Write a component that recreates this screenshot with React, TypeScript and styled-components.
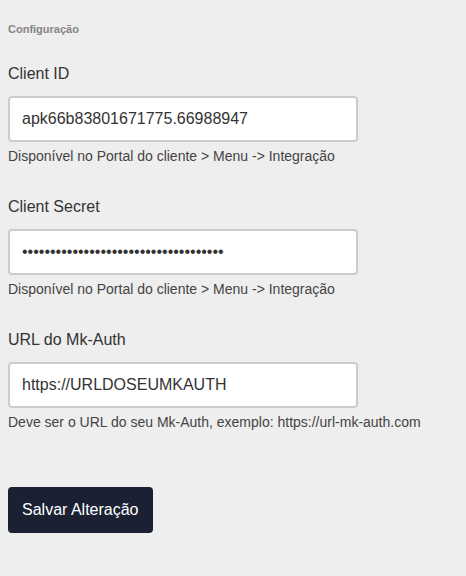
import React from 'react'
import styled, { createGlobalStyle } from 'styled-components'

const GlobalStyle = createGlobalStyle`
  html, body {
    margin: 0;
    background: #eeeeee;
  }
  body {
    font-family: "Liberation Sans", Arial, sans-serif;
  }
`

const Page = styled.form`
  padding: 23px 8px 40px;
  display: flex;
  flex-direction: column;
  align-items: flex-start;
`

const Title = styled.h6`
  margin: 0 0 29px;
  font-size: 11px;
  line-height: 13px;
  font-weight: bold;
  color: #858585;
`

const Field = styled.div`
  display: flex;
  flex-direction: column;
  align-items: flex-start;
  margin-bottom: 34px;
`

const Label = styled.label`
  font-size: 16px;
  line-height: 18px;
  color: #333;
  margin-bottom: 13px;
`

const Input = styled.input`
  box-sizing: border-box;
  width: 350px;
  height: 46px;
  padding: 0 12px;
  border: 2px solid #cccccc;
  border-radius: 4px;
  background: #fff;
  font-family: inherit;
  font-size: 16px;
  color: #333;
  outline: none;
`

const Hint = styled.small`
  margin-top: 6px;
  font-size: 14px;
  line-height: 16px;
  color: #444;
`

const SaveButton = styled.button`
  margin-top: 23px;
  height: 46px;
  padding: 0 14px;
  border: none;
  border-radius: 4px;
  background: #1b2033;
  color: #fff;
  font-family: inherit;
  font-size: 16px;
  cursor: pointer;
`

const fields = [
  {
    id: 'client-id',
    label: 'Client ID',
    type: 'text',
    value: 'apk66b83801671775.66988947',
    hint: 'Disponível no Portal do cliente > Menu -> Integração',
  },
  {
    id: 'client-secret',
    label: 'Client Secret',
    type: 'password',
    value: 'abcdefghijklmnopqrstuvwxyz1234567890',
    hint: 'Disponível no Portal do cliente > Menu -> Integração',
  },
  {
    id: 'mk-auth-url',
    label: 'URL do Mk-Auth',
    type: 'text',
    value: 'https://URLDOSEUMKAUTH',
    hint: 'Deve ser o URL do seu Mk-Auth, exemplo: https://url-mk-auth.com',
  },
]

const App = (): JSX.Element => {
  return (
    <>
      <GlobalStyle />
      <Page onSubmit={(e) => e.preventDefault()}>
        <Title>Configuração</Title>
        {fields.map((f) => (
          <Field key={f.id}>
            <Label htmlFor={f.id}>{f.label}</Label>
            <Input id={f.id} type={f.type} defaultValue={f.value} />
            <Hint>{f.hint}</Hint>
          </Field>
        ))}
        <SaveButton type="submit">Salvar Alteração</SaveButton>
      </Page>
    </>
  )
}

export default App
